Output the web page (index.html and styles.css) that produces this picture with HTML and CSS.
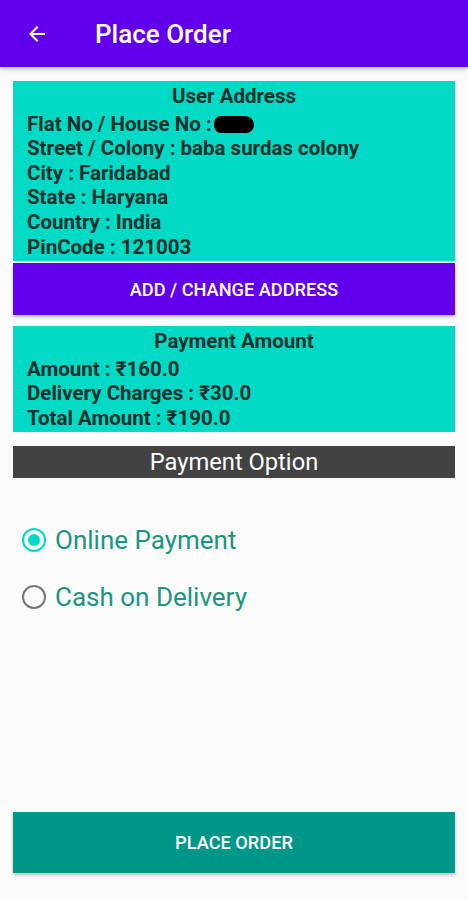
FILE: index.html
```html
<!DOCTYPE html>
<html lang="en">
<head>
  <meta charset="UTF-8">
  <title>Place Order</title>
  <link rel="stylesheet" href="styles.css">
</head>
<body>
  <div class="app-bar">
    <svg class="back" width="24" height="24" viewBox="0 0 24 24">
      <path d="M20 11H7.83l5.59-5.59L12 4l-8 8 8 8 1.41-1.41L7.83 13H20v-2z" fill="#fff"/>
    </svg>
    <span class="title">Place Order</span>
  </div>

  <div class="content">
    <div class="card">
      <div class="card-title">User Address</div>
      <div>Flat No / House No :<span class="redact"></span></div>
      <div>Street / Colony : baba surdas colony</div>
      <div>City : Faridabad</div>
      <div>State : Haryana</div>
      <div>Country : India</div>
      <div>PinCode : 121003</div>
    </div>
    <button class="btn btn-purple">ADD / CHANGE ADDRESS</button>

    <div class="card card-pay">
      <div class="card-title">Payment Amount</div>
      <div>Amount : ₹160.0</div>
      <div>Delivery Charges : ₹30.0</div>
      <div>Total Amount : ₹190.0</div>
    </div>

    <div class="option-bar">Payment Option</div>

    <div class="radios">
      <label class="radio"><span class="dot checked"></span>Online Payment</label>
      <label class="radio"><span class="dot"></span>Cash on Delivery</label>
    </div>
  </div>

  <button class="btn btn-teal">PLACE ORDER</button>
</body>
</html>
```

FILE: styles.css
```css
body {
  margin: 0;
  width: 468px;
  height: 900px;
  background-color: #fafafa;
  font-family: Roboto, "Noto Sans", sans-serif;
  display: flex;
  flex-direction: column;
}
.app-bar {
  height: 67px;
  background-color: #6200ee;
  display: flex;
  align-items: center;
  box-shadow: 0 2px 4px rgba(0,0,0,0.25);
}
.back {
  margin-left: 25px;
}
.title {
  margin-left: 46px;
  color: white;
  font-size: 26px;
  font-weight: 500;
}
.content {
  padding: 14px 13px 0;
  flex: 1;
}
.card {
  background-color: #03dac5;
  color: #10302c;
  font-weight: bold;
  font-size: 20.5px;
  line-height: 24.6px;
  padding: 3px 14px 2px;
}
.card-title {
  text-align: center;
  margin-bottom: 3px;
}
.redact {
  display: inline-block;
  width: 40px;
  height: 17px;
  background: #000;
  border-radius: 8px 10px 9px 8px;
  vertical-align: -2px;
  margin-left: 2px;
}
.btn {
  display: block;
  width: 100%;
  border: none;
  color: white;
  font-family: Roboto, sans-serif;
  font-size: 18.2px;
  font-weight: 500;
  box-shadow: 0 2px 3px rgba(0,0,0,0.25);
}
.btn-purple {
  margin-top: 2px;
  height: 52px;
  background-color: #6200ee;
}
.card-pay {
  margin-top: 11px;
  padding-bottom: 1px;
}
.option-bar {
  margin-top: 14px;
  height: 32px;
  line-height: 33px;
  background-color: #424242;
  color: white;
  text-align: center;
  font-size: 23.7px;
}
.radios {
  margin-top: 34px;
  padding-left: 9px;
}
.radio {
  display: flex;
  align-items: center;
  height: 57px;
  color: #1b957f;
  font-size: 26px;
}
.dot {
  width: 24px;
  height: 24px;
  border: 2.5px solid #757575;
  border-radius: 50%;
  margin-right: 9px;
  box-sizing: border-box;
  position: relative;
}
.dot.checked {
  border-color: #03dac5;
}
.dot.checked::after {
  content: "";
  position: absolute;
  left: 3.5px;
  top: 3.5px;
  width: 12px;
  height: 12px;
  border-radius: 50%;
  background-color: #03dac5;
}
.btn-teal {
  width: 442px;
  margin: 0 13px 27px;
  height: 61px;
  background-color: #009688;
}
```
